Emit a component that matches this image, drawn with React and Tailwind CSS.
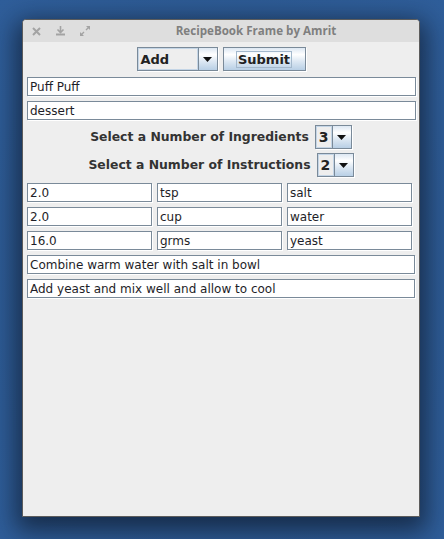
import React from "react";

const gradBtn =
  "bg-[linear-gradient(to_bottom,#dde8f3_0%,#ffffff_30%,#dde8f3_60%,#b8cfe5_100%)]";

function Arrow() {
  return (
    <svg width="9" height="5" viewBox="0 0 9 5">
      <path d="M0 0 H9 L4.5 5 Z" fill="#111" />
    </svg>
  );
}

function Combo({ value, textW, big = false }) {
  return (
    <div className="flex h-[24px] border border-[#7a8a99] bg-[#eeeeee] shadow-[1px_1px_0_#ffffff]">
      <div
        className={`flex items-center border border-[#c4d5e6] pl-[2px] font-bold text-[#222] leading-none ${big ? "text-[14px]" : "text-[13px]"}`}
        style={{ width: textW }}
      >
        {value}
      </div>
      <div className={`flex w-[19px] items-center justify-center border-l border-[#7a8a99] ${gradBtn}`}>
        <Arrow />
      </div>
    </div>
  );
}

function Field({ value, w }) {
  return (
    <div
      className="flex h-[19px] shrink-0 items-center border border-[#7a8a99] bg-white pl-[2px] text-[12px] text-[#1e1e28] leading-none shadow-[1px_1px_0_#ffffff]"
      style={{ width: w }}
    >
      {value}
    </div>
  );
}

export default function App() {
  const ingredients = [
    ["2.0", "tsp", "salt"],
    ["2.0", "cup", "water"],
    ["16.0", "grms", "yeast"],
  ];
  return (
    <div className="h-[539px] w-[444px] overflow-hidden bg-[radial-gradient(ellipse_at_center,#2b568c_0%,#2d5a93_60%,#2f5e9a_100%)] pt-[19px] pl-[22px] font-['DejaVu_Sans',sans-serif]">
      <div className="flex h-[498px] w-[398px] flex-col overflow-hidden rounded-t-[4px] border border-[#5c5c5c] bg-[#eeeeee] shadow-[0_8px_24px_6px_rgba(10,20,35,0.65)]">
        {/* title bar */}
        <div className="relative flex h-[22px] shrink-0 items-center bg-[#dedede]">
          <div className="flex items-center pl-[9px] gap-[15px]">
            <svg width="9" height="9" viewBox="0 0 9 9">
              <path d="M1 1 L8 8 M8 1 L1 8" stroke="#a3a3a3" strokeWidth="2" />
            </svg>
            <svg width="9" height="10" viewBox="0 0 9 10">
              <path d="M4.5 0 V6 M1.5 3.5 L4.5 6.5 L7.5 3.5" stroke="#a3a3a3" strokeWidth="1.6" fill="none" />
              <path d="M0 8.5 H9" stroke="#a3a3a3" strokeWidth="2" />
            </svg>
            <svg width="10" height="10" viewBox="0 0 10 10">
              <path d="M6 0 H10 V4 Z" fill="#a3a3a3" />
              <path d="M0 6 V10 H4 Z" fill="#a3a3a3" />
              <path d="M8.5 1.5 L6 4 M1.5 8.5 L4 6" stroke="#a3a3a3" strokeWidth="1.4" />
            </svg>
          </div>
          <div className="absolute left-[70px] right-0 top-0 flex h-full items-center justify-center font-['Open_Sans',sans-serif] text-[11.6px] font-bold text-[#7f7f7f]">
            RecipeBook Frame by Amrit
          </div>
        </div>

        {/* content */}
        <div className="flex flex-col">
          <div className="mt-[5px] flex justify-center gap-[5px]">
            <Combo value="Add" textW={60} />
            <div
              className={`flex h-[24px] w-[83px] items-center justify-center border border-[#7a8a99] ${gradBtn} shadow-[1px_1px_0_#ffffff]`}
            >
              <span className="border border-[#a3b8cc] px-[1px] text-[13px] font-bold leading-[15px] text-[#222]">
                Submit
              </span>
            </div>
          </div>

          <div className="ml-[4px] mt-[6px]">
            <Field value="Puff Puff" w={389} />
          </div>
          <div className="ml-[4px] mt-[5px]">
            <Field value="dessert" w={389} />
          </div>

          <div className="mt-[5px] flex items-center justify-center gap-[6px]">
            <span className="text-[12.4px] font-bold text-[#333]">Select a Number of Ingredients</span>
            <Combo value="3" textW={16} big />
          </div>
          <div className="mt-[4px] flex items-center justify-center gap-[6px]">
            <span className="text-[12.4px] font-bold text-[#333]">Select a Number of Instructions</span>
            <Combo value="2" textW={16} big />
          </div>

          <div className="mt-[6px] flex flex-col gap-[5px]">
            {ingredients.map((row, i) => (
              <div key={i} className="ml-[4px] flex gap-[5px]">
                {row.map((v, j) => (
                  <Field key={j} value={v} w={125} />
                ))}
              </div>
            ))}
            <div className="ml-[4px]">
              <Field value="Combine warm water with salt in bowl" w={388} />
            </div>
            <div className="ml-[4px]">
              <Field value="Add yeast and mix well and allow to cool" w={388} />
            </div>
          </div>
        </div>
      </div>
    </div>
  );
}
